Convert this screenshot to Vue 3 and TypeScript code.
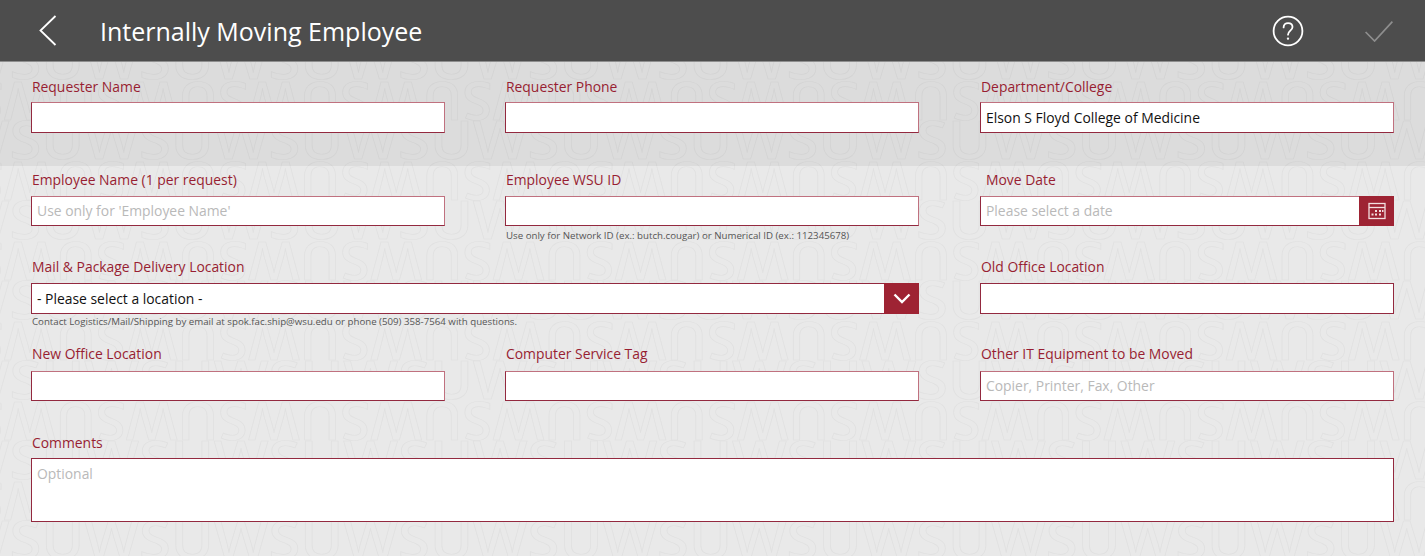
<template>
  <div class="page">
    <!-- Watermark behind the form -->
    <div class="watermark" aria-hidden="true">
      <div v-for="n in 13" :key="n" class="wm-row" :class="{ flipped: n % 2 === 0 }">{{ wmText }}</div>
    </div>

    <header class="topbar">
      <button class="icon-btn back-btn" title="Back">
        <svg width="18" height="32" viewBox="0 0 18 32" fill="none" stroke="#fff" stroke-width="1.8"><polyline points="16.5,1 1.5,15.5 16.5,30" /></svg>
      </button>
      <h1 class="title">Internally Moving Employee</h1>
      <button class="icon-btn help-btn" title="Help">
        <svg width="32" height="32" viewBox="0 0 32 32" fill="none" stroke="#fff" stroke-width="1.8" stroke-linecap="round">
          <circle cx="16" cy="16" r="14.4" />
          <path d="M11.6 12.4c0-2.6 1.9-4.3 4.5-4.3s4.4 1.6 4.4 3.9c0 3.6-4.5 3.7-4.5 7.7" />
          <circle cx="16" cy="23.6" r="0.5" stroke-width="1.4" />
        </svg>
      </button>
      <button class="icon-btn check-btn" title="Submit">
        <svg width="28" height="21" viewBox="0 0 28 21" fill="none" stroke="#8e8e8e" stroke-width="1.7"><polyline points="0.6,11 9.6,20 27.4,0.6" /></svg>
      </button>
    </header>

    <main class="form">
      <section class="band">
        <div class="row">
          <div v-for="f in firstRow" :key="f.label" class="field">
            <label class="label">{{ f.label }}</label>
            <input class="input" type="text" :value="f.value" />
          </div>
        </div>
      </section>

      <div class="row row-two">
        <div class="field">
          <label class="label">Employee Name (1 per request)</label>
          <input class="input thin" type="text" placeholder="Use only for 'Employee Name'" />
        </div>
        <div class="field">
          <label class="label">Employee WSU ID</label>
          <input class="input thin" type="text" />
          <p class="hint hint-id">Use only for Network ID (ex.: butch.cougar) or Numerical ID (ex.: 112345678)</p>
        </div>
        <div class="field">
          <label class="label label-date">Move Date</label>
          <div class="combo thin">
            <input class="input thin" type="text" placeholder="Please select a date" />
            <button class="combo-btn" title="Pick a date">
              <svg width="18" height="18" viewBox="0 0 18 18" fill="none" stroke="#f3dfe0" stroke-width="1.3">
                <rect x="1" y="1.5" width="16" height="15" />
                <line x1="1" y1="5.5" x2="17" y2="5.5" />
                <g fill="#f3dfe0" stroke="none">
                  <rect x="7" y="8" width="2" height="2" /><rect x="11" y="8" width="2" height="2" /><rect x="14" y="8" width="1.5" height="2" />
                  <rect x="3.5" y="11.5" width="2" height="2" /><rect x="7" y="11.5" width="2" height="2" /><rect x="11" y="11.5" width="2" height="2" />
                </g>
              </svg>
            </button>
          </div>
        </div>
      </div>

      <div class="row row-three">
        <div class="field span-2">
          <label class="label">Mail &amp; Package Delivery Location</label>
          <div class="combo">
            <input class="input dark" type="text" value="- Please select a location -" />
            <button class="combo-btn" title="Open list">
              <svg width="18" height="11" viewBox="0 0 18 11" fill="none" stroke="#fff" stroke-width="2.4"><polyline points="1.5,1.5 9,9 16.5,1.5" /></svg>
            </button>
          </div>
          <p class="hint hint-mail">Contact Logistics/Mail/Shipping by email at spok.fac.ship@wsu.edu or phone (509) 358-7564 with questions.</p>
        </div>
        <div class="field">
          <label class="label">Old Office Location</label>
          <input class="input dark" type="text" />
        </div>
      </div>

      <div class="row row-four">
        <div class="field">
          <label class="label">New Office Location</label>
          <input class="input thin" type="text" />
        </div>
        <div class="field">
          <label class="label">Computer Service Tag</label>
          <input class="input thin" type="text" />
        </div>
        <div class="field">
          <label class="label">Other IT Equipment to be Moved</label>
          <input class="input thin" type="text" placeholder="Copier, Printer, Fax, Other" />
        </div>
      </div>

      <div class="row row-five">
        <div class="field span-3">
          <label class="label">Comments</label>
          <textarea class="input area" placeholder="Optional"></textarea>
        </div>
      </div>
    </main>
  </div>
</template>

<script setup lang="ts">
const wmText = 'SUW'.repeat(13)

const firstRow = [
  { label: 'Requester Name', value: '' },
  { label: 'Requester Phone', value: '' },
  { label: 'Department/College', value: 'Elson S Floyd College of Medicine' },
]
</script>

<style>
html, body { margin: 0; background: #e9e9e9; }
</style>

<style scoped>
.page {
  position: relative;
  width: 1425px;
  height: 556px;
  overflow: hidden;
  background: #e9e9e9;
  font-family: 'Open Sans', 'Noto Sans', sans-serif;
}

/* Watermark */
.watermark {
  position: absolute;
  top: 39px;
  left: 0;
  right: 0;
  bottom: 0;
  overflow: hidden;
}
.wm-row {
  height: 40px;
  line-height: 40px;
  width: 1800px;
  font-size: 52px;
  font-weight: 600;
  white-space: nowrap;
  color: transparent;
  -webkit-text-stroke: 0.7px #e0e0e0;
  transform-origin: left center;
  transform: translateX(-120px) scaleX(1.113);
}
.wm-row.flipped {
  transform: translate(1470px, 3px) scale(-1.05, -1);
}

/* Header */
.topbar {
  position: relative;
  display: flex;
  align-items: center;
  height: 61px;
  background: #4d4d4d;
  border-bottom: 1px solid #8f8f8f;
  padding-left: 39px;
}
.icon-btn {
  display: flex;
  align-items: center;
  justify-content: center;
  padding: 0;
  border: none;
  background: none;
}
.back-btn { width: 18px; margin-right: 43px; }
.title {
  flex: 1;
  margin: 0;
  font-size: 25px;
  font-weight: 400;
  color: #fff;
}
.help-btn { margin-right: 62px; transform: translateX(1px); }
.check-btn { margin-right: 32px; margin-top: 1px; }

/* Form */
.form { position: relative; }
.band {
  height: 89px;
  padding-top: 15px;
  background: rgba(0, 0, 0, 0.055);
}
.row {
  display: grid;
  grid-template-columns: 414px 414px 415px;
  column-gap: 60px;
  padding: 0 31px;
}
.row > .field:last-child { margin-left: 1px; }
.row-two { margin-top: 4px; height: 87px; }
.row-three { height: 87px; }
.row-four { height: 89px; }
.span-2 { grid-column: span 2; }
.row > .span-3:last-child { grid-column: span 3; margin-left: 0; }

.field { display: flex; flex-direction: column; }
.label {
  height: 20px;
  line-height: 20px;
  padding-left: 1px;
  margin-bottom: 5px;
  font-size: 13.9px;
  color: #981e32;
}
.row-two .label { margin-bottom: 6px; }
.row-three .label { margin-bottom: 6px; }
.row-four .label { margin-bottom: 7px; }
.label-date { padding-left: 6px; }

.input {
  box-sizing: border-box;
  width: 100%;
  height: 31px;
  padding: 0 5px;
  border: 1px solid #c0717f;
  border-bottom-color: #93293f;
  border-left-color: #93293f;
  border-radius: 0;
  outline: none;
  background: #fff;
  font-family: inherit;
  font-size: 13.9px;
  color: #111;
}
.input.thin { height: 30px; padding-bottom: 2px; }
.input.dark { border-color: #93293f; }
.input::placeholder { color: #b9b9b9; opacity: 1; font-size: 13.9px; }
.area {
  display: block;
  height: 64px;
  padding-top: 5px;
  border-color: #93293f;
  resize: none;
}

.combo { display: flex; height: 31px; }
.combo.thin { height: 30px; }
.combo .input { flex: 1; min-width: 0; border-right: none; }
.combo-btn {
  display: flex;
  align-items: center;
  justify-content: center;
  flex: 0 0 35px;
  padding: 0;
  border: none;
  background: #9e2333;
}

.hint {
  margin: 0;
  font-size: 9.7px;
  line-height: 12px;
  color: #555;
}
.hint-id { margin-top: 4px; padding-left: 1px; }
.hint-mail { margin-top: 2px; padding-left: 1px; }
</style>
